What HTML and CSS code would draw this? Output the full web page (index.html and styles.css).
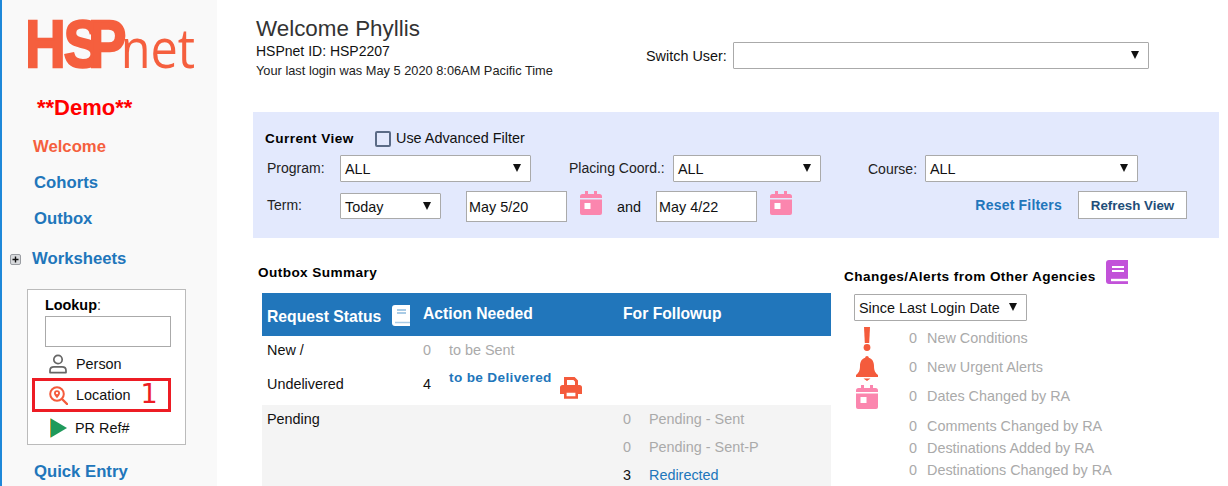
FILE: index.html
```html
<!DOCTYPE html>
<html lang="en">
<head>
<meta charset="utf-8">
<title>HSPnet</title>
<link rel="stylesheet" href="styles.css">
</head>
<body>
<div class="page">
  <aside class="sidebar">
    <svg class="logo" width="180" height="60" viewBox="0 0 180 60">
      <text class="logo-hsp" transform="scale(.85 1)" x="-4 42 71" y="55">HSP</text>
      <text class="logo-net" transform="scale(.9 1)" x="103" y="56">net</text>
    </svg>
    <div class="demo">**Demo**</div>
    <nav class="nav">
      <a class="nav-item nav-active">Welcome</a>
      <a class="nav-item">Cohorts</a>
      <a class="nav-item">Outbox</a>
    </nav>
    <div class="worksheets">
      <svg class="plus" width="11" height="11" viewBox="0 0 11 11"><rect x=".5" y=".5" width="10" height="10" rx="1.5" fill="#d8dadd" stroke="#9a9da2"/><path d="M2.5 5.5h6M5.5 2.5v6" stroke="#111" stroke-width="1.4"/></svg>
      <a class="nav-link">Worksheets</a>
    </div>
    <div class="lookup">
      <div class="lookup-label"><b>Lookup</b>:</div>
      <input class="lookup-input" type="text" aria-label="Lookup">
      <div class="lookup-row lookup-person">
        <svg width="18" height="20" viewBox="0 0 18 20"><circle cx="9" cy="5.5" r="4.2" fill="none" stroke="#666" stroke-width="1.7"/><path d="M1 18.6v-2.2c0-2.2 1.8-3.6 4-3.6h8c2.200 0 4 1.400 4 3.600v2.200z" fill="none" stroke="#666" stroke-width="1.700" stroke-linejoin="round"/></svg>
        <span>Person</span>
      </div>
      <div class="lookup-row lookup-location">
        <svg width="19" height="19" viewBox="0 0 19 19"><circle cx="8" cy="8" r="6.800" fill="none" stroke="#f45b3c" stroke-width="2"/><path d="M13 13l5 5" stroke="#f45b3c" stroke-width="2.400" stroke-linecap="round"/><path d="M8 12.300c-1.800-2.300-3-3.600-3-5.100a3 3 0 0 1 6 0c0 1.500-1.200 2.800-3 5.100z" fill="#f45b3c"/><circle cx="8" cy="7.100" r="1.200" fill="#fff"/></svg>
        <span>Location</span>
        <span class="callout">1</span>
      </div>
      <div class="lookup-row lookup-ref">
        <svg width="18" height="20" viewBox="0 0 18 20"><path d="M1 0.500L17 10 1 19.500z" fill="#1f9a5c"/><path d="M0.500 0.500v19" stroke="#c9a13b" stroke-width="1"/></svg>
        <span>PR Ref#</span>
      </div>
    </div>
    <a class="nav-item quick">Quick Entry</a>
  </aside>

  <main class="main">
    <header class="header">
      <div class="welcome">
        <h1 class="welcome-title">Welcome Phyllis</h1>
        <div class="welcome-id">HSPnet ID: HSP2207</div>
        <div class="welcome-last">Your last login was May 5 2020 8:06AM Pacific Time</div>
      </div>
      <div class="switch">
        <span class="switch-label">Switch User:</span>
        <div class="select select-switch"></div>
      </div>
    </header>

    <section class="filters">
      <div class="filter-top">
        <b class="spaced current">Current View</b>
        <span class="checkbox"></span>
        <span class="adv">Use Advanced Filter</span>
      </div>
      <div class="filter-row">
        <span class="lbl lbl-program">Program:</span>
        <div class="select sel-program">ALL</div>
        <span class="lbl lbl-coord">Placing Coord.:</span>
        <div class="select sel-coord">ALL</div>
        <span class="lbl lbl-course">Course:</span>
        <div class="select sel-course">ALL</div>
      </div>
      <div class="filter-row filter-term">
        <span class="lbl lbl-program">Term:</span>
        <div class="select sel-term">Today</div>
        <div class="date date-first">May 5/20</div>
        <svg class="cal" width="22" height="24" viewBox="0 0 22 24"><use href="#cal-shape"/></svg>
        <span class="and">and</span>
        <div class="date">May 4/22</div>
        <svg class="cal" width="22" height="24" viewBox="0 0 22 24"><use href="#cal-shape"/></svg>
        <a class="reset">Reset Filters</a>
        <button class="refresh" type="button">Refresh View</button>
      </div>
    </section>

    <div class="lower">
      <section class="outbox">
        <h2 class="section-title spaced">Outbox Summary</h2>
        <div class="table">
          <div class="thead">
            <div class="th th-status">
              <span class="th-status-text">Request Status</span>
              <svg width="18" height="21" viewBox="0 0 18 21"><path d="M3 0h15v21H3a3 3 0 0 1-3-3V3a3 3 0 0 1 3-3z" fill="#fff"/><path d="M5 5h9M5 8h9" stroke="#a9cbe6" stroke-width="2"/><path d="M3 17.500h15" stroke="#a9cbe6" stroke-width="1.500"/></svg>
            </div>
            <div class="th">Action Needed</div>
            <div class="th">For Followup</div>
          </div>
          <div class="row row-new">
            <span>New /</span><span class="muted">0</span><span class="muted">to be Sent</span>
          </div>
          <div class="row row-und">
            <span>Undelivered</span><span>4</span>
            <span class="deliver">
              <a class="link-bold">to be Delivered</a>
              <svg class="printer" width="22" height="22" viewBox="0 0 22 22"><path d="M5.500 9V1.500h8.500l2.500 2.500v5" fill="none" stroke="#f45b3c" stroke-width="3"/><path d="M2.500 8h17A2.500 2.500 0 0 1 22 10.500V17h-4v-3H4v3H0v-6.500A2.500 2.500 0 0 1 2.500 8z" fill="#f45b3c"/><path d="M5.300 14.500h11.400v6H5.300z" fill="none" stroke="#f45b3c" stroke-width="2.600"/></svg>
            </span>
          </div>
          <div class="pending">
            <div class="row row-p">
              <span>Pending</span><span></span><span></span><span class="muted">0</span><span class="muted">Pending - Sent</span>
            </div>
            <div class="row row-p">
              <span></span><span></span><span></span><span class="muted">0</span><span class="muted">Pending - Sent-P</span>
            </div>
            <div class="row row-p">
              <span></span><span></span><span></span><span>3</span><a class="link">Redirected</a>
            </div>
          </div>
        </div>
      </section>

      <section class="alerts">
        <div class="alerts-head">
          <h2 class="section-title spaced alerts-title">Changes/Alerts from Other Agencies</h2>
          <svg width="22" height="24" viewBox="0 0 22 24"><path d="M3 0h19v24H3a3 3 0 0 1-3-3V3a3 3 0 0 1 3-3z" fill="#c252d9"/><path d="M6 7h12M6 11h12" stroke="#fff" stroke-width="1.800"/><path d="M5 20h17" stroke="#fff" stroke-width="2.400"/></svg>
        </div>
        <div class="select sel-since">Since Last Login Date</div>
        <div class="alert-list">
          <div class="alert alert-tall">
            <span class="alert-icon"><svg width="22" height="24" viewBox="0 0 22 24"><path d="M8 0h6l-.8 16H8.800z" fill="#f45b3c"/><circle cx="11" cy="20.500" r="3.400" fill="#f45b3c"/></svg></span>
            <span class="num">0</span><span>New Conditions</span>
          </div>
          <div class="alert alert-tall">
            <span class="alert-icon"><svg width="22" height="25" viewBox="0 0 22 25"><path d="M11 0c1 0 1.800.800 1.800 1.800C16.500 3 18 6 18 10c0 5 1.500 7 4 9v2H0v-2c2.500-2 4-4 4-9 0-4 1.500-7 5.200-8.200C9.200.800 10 0 11 0z" fill="#f45b3c"/><path d="M7.500 22.500h7L11 25z" fill="#f45b3c"/></svg></span>
            <span class="num">0</span><span>New Urgent Alerts</span>
          </div>
          <div class="alert alert-tall alert-cal">
            <span class="alert-icon"><svg width="22" height="24" viewBox="0 0 22 24"><use href="#cal-shape"/></svg></span>
            <span class="num">0</span><span>Dates Changed by RA</span>
          </div>
          <div class="alert"><span class="alert-icon"></span><span class="num">0</span><span>Comments Changed by RA</span></div>
          <div class="alert"><span class="alert-icon"></span><span class="num">0</span><span>Destinations Added by RA</span></div>
          <div class="alert"><span class="alert-icon"></span><span class="num">0</span><span>Destinations Changed by RA</span></div>
        </div>
      </section>
    </div>
  </main>
</div>
<svg class="sprite" width="0" height="0" aria-hidden="true"><defs><g id="cal-shape"><path d="M5 0h3v3h6V0h3v3h2.500A2.500 2.500 0 0 1 22 5.500V7H0V5.500A2.500 2.500 0 0 1 2.500 3H5z" fill="#fb86ae"/><path d="M0 8.500h22V22a2 2 0 0 1-2 2H2a2 2 0 0 1-2-2z" fill="#fb86ae"/><rect x="4.500" y="12" width="6" height="6" fill="#fff"/></g></defs></svg>
</body>
</html>
```
FILE: styles.css
```css
* { box-sizing: border-box; }
html, body { margin: 0; padding: 0; height: 486px; overflow: hidden; background: #fff; }
body { font-family: "Liberation Sans", Arial, sans-serif; font-size: 14.4px; color: #111; }
a { text-decoration: none; }
.sprite { display: block; height: 0; }
.page { display: flex; width: 1219px; height: 486px; overflow: hidden; }

.sidebar { flex: 0 0 217px; height: 486px; background: #f9f9f9; border-left: 2px solid #1e88d9; padding-top: 12px; overflow: hidden; }
.logo { display: block; margin-left: 26px; }
.logo-hsp { font-family: "Liberation Sans", sans-serif; font-weight: 700; font-size: 67px; fill: #f55f3e; stroke: #f55f3e; stroke-width: 2.5px; }
.logo-net { font-family: "Open Sans", sans-serif; font-weight: 400; font-size: 54px; fill: #f55f3e; }
.demo { margin: 22px 0 0 35px; font-size: 22px; line-height: 28px; font-weight: 700; color: #f00; }
.nav { margin-top: 7px; }
.nav-item { display: block; margin-left: 32px; font-size: 16.7px; line-height: 36px; font-weight: 700; color: #2176bb; }
.nav-active { color: #f55f3e; margin-left: 31px; }
.worksheets { display: flex; align-items: center; margin-top: 4px; height: 36px; padding-left: 8px; }
.plus { display: block; margin-right: 11px; }
.nav-link { font-size: 16.7px; font-weight: 700; color: #2176bb; }
.lookup { margin: 12px 0 0 25px; width: 159px; height: 156px; background: #fff; border: 1px solid #bbb; padding-top: 5px; }
.lookup-label { margin-left: 17px; font-size: 14.4px; line-height: 20px; color: #333; }
.lookup-label b { color: #000; }
.lookup-input { display: block; margin: 1px 0 0 17px; width: 126px; height: 31px; border: 1px solid #aaa; background: #fff; padding: 0; }
.lookup-row { display: flex; align-items: center; }
.lookup-row svg { display: block; }
.lookup-person { height: 28px; margin-top: 3px; padding-left: 21px; gap: 9px; }
.lookup-location { margin-left: 4px; width: 139px; height: 34px; border: 3px solid #ed1c24; padding-left: 14px; gap: 8px; }
.callout { margin: -2px 0 0 2px; font-family: "DejaVu Sans", sans-serif; font-size: 27px; line-height: 28px; color: #ed1c24; }
.lookup-ref { height: 32px; padding-left: 22px; gap: 7px; }
.quick { margin-top: 9px; }

.main { flex: 0 0 1002px; min-width: 0; padding-left: 36px; }
.header { display: flex; height: 112px; }
.welcome { flex: 0 0 393px; padding: 16px 0 0 3px; }
.welcome-title { margin: 0; font-size: 22.4px; line-height: 26px; font-weight: 400; color: #333; }
.welcome-id { margin-top: 1px; font-size: 14px; line-height: 16px; }
.welcome-last { margin-top: 4px; font-size: 12.8px; line-height: 16px; color: #222; }
.switch { display: flex; align-items: center; height: 27px; margin-top: 42px; }
.switch-label { width: 87px; }

.select { position: relative; height: 27px; line-height: 27px; padding-left: 4px; background: #fff; border: 1px solid #aaa; border-radius: 1px; }
.select::after { content: ""; position: absolute; top: 8px; right: 9px; border-left: 4px solid transparent; border-right: 4px solid transparent; border-top: 8px solid #111; }
.select-switch { width: 416px; }

.filters { height: 126px; background: #e3e9fd; padding: 18px 32px 0 12px; }
.filter-top { display: flex; align-items: center; height: 17px; }
.adv { margin-top: -2px; }
.spaced { letter-spacing: .42px; font-size: 13.6px; font-weight: 700; }
.current { width: 110px; color: #000; }
.checkbox { width: 16px; height: 16px; margin-right: 5px; background: #e3e9fd; border: 2px solid #5b6b86; border-radius: 2px; }
.filter-row { display: flex; align-items: center; height: 27px; margin-top: 8px; padding-left: 2px; }
.lbl { font-size: 14px; color: #222; }
.lbl-program { width: 73px; margin-top: -1px; }
.lbl-coord { width: 104px; margin: -1px 0 0 38px; }
.lbl-course { width: 57px; margin-left: 47px; }
.sel-program { width: 191px; }
.sel-coord { width: 148px; }
.sel-course { width: 213px; }
.filter-term { height: 31px; margin-top: 9px; }
.filter-term .lbl { margin-top: -3px; }
.sel-term { width: 101px; height: 26px; line-height: 26px; margin-top: -1px; }
.date { width: 101px; height: 31px; line-height: 30px; padding-left: 2px; background: #fff; border: 1px solid #aaa; }
.date-first { margin-left: 25px; }
.cal { display: block; margin-left: 13px; align-self: flex-start; }
.and { width: 39px; margin-left: 15px; }
.reset { margin-left: auto; margin-right: 16px; align-self: flex-start; font-size: 14px; letter-spacing: .2px; line-height: 28px; font-weight: 700; color: #2176bb; }
.refresh { width: 109px; height: 28px; align-self: flex-start; padding: 0; background: #fff; border: 1px solid #aaa; font-family: inherit; font-size: 13.33px; font-weight: 700; color: #1f4e79; }

.lower { display: flex; margin-top: 22px; }
.outbox { flex: 0 0 591px; }
.section-title { margin: 0; line-height: 16px; color: #000; }
.outbox .section-title { margin: 5px 0 0 5px; }
.table { width: 569px; margin: 12px 0 0 9px; }
.thead { display: grid; grid-template-columns: 161px 200px 1fr; height: 43px; background: #2176bb; color: #fff; }
.th { padding-top: 12px; font-size: 15.7px; line-height: 18px; font-weight: 700; }
.th-status { display: flex; padding: 12px 0 0 5px; gap: 11px; line-height: 22px; }
.th-status-text { margin-top: 1px; }
.row { display: grid; grid-template-columns: 156px 26px 174px 26px 1fr; padding-left: 5px; align-items: center; }
.row-new { height: 31px; padding-bottom: 3px; }
.row-und { height: 38px; padding-bottom: 4px; }
.muted { color: #aaa; }
.deliver { display: flex; align-items: flex-start; grid-column: span 3; height: 34px; padding-top: 3px; }
.link-bold { font-size: 13.6px; letter-spacing: .35px; line-height: 16px; font-weight: 700; color: #2176bb; }
.printer { display: block; margin: 7px 0 0 8px; }
.pending { background: #f4f4f4; height: 110px; }
.row-p { height: 28px; }
.link { color: #2176bb; }

.alerts { flex: 0 0 375px; }
.alerts-head { display: flex; height: 24px; gap: 10px; }
.alerts-title { margin-top: 9px; }
.sel-since { width: 173px; margin: 10px 0 0 10px; }
.alert-list { margin: 2px 0 0 12px; color: #aaa; }
.alert { display: flex; align-items: center; height: 22px; }
.alert-tall { height: 29px; }
.alert-tall .alert-icon { margin-top: 3px; }
.alert-cal { margin-bottom: 5px; }
.alert-icon { display: block; flex: 0 0 53px; }
.alert-icon svg { display: block; }
.num { width: 18px; }
```
